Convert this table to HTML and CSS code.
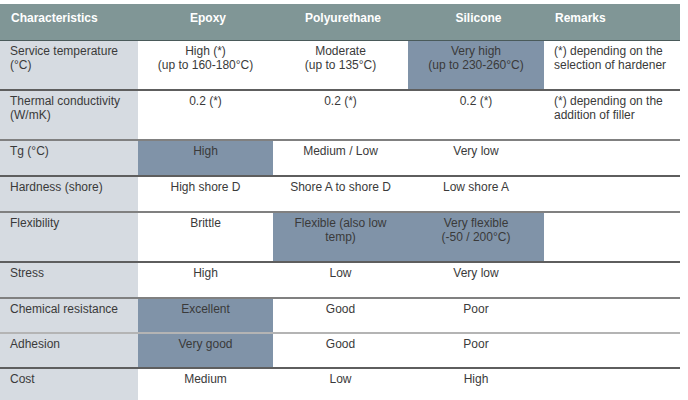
FILE: index.html
```html
<!DOCTYPE html>
<html>
<head>
<meta charset="utf-8">
<link rel="stylesheet" href="styles.css">
</head>
<body>
<table class="cmp">
  <colgroup>
    <col class="c1"><col class="c2"><col class="c3"><col class="c4"><col class="c5">
  </colgroup>
  <thead>
    <tr class="head">
      <th class="left">Characteristics</th>
      <th>Epoxy</th>
      <th>Polyurethane</th>
      <th>Silicone</th>
      <th class="left">Remarks</th>
    </tr>
  </thead>
  <tbody>
    <tr class="r-tall b-dark">
      <td class="name">Service temperature<br>(°C)</td>
      <td>High (*)<br>(up to 160-180°C)</td>
      <td>Moderate<br>(up to 135°C)</td>
      <td class="hl">Very high<br>(up to 230-260°C)</td>
      <td class="left">(*) depending on the<br>selection of hardener</td>
    </tr>
    <tr class="r-tall b-dark">
      <td class="name">Thermal conductivity<br>(W/mK)</td>
      <td>0.2 (*)</td>
      <td>0.2 (*)</td>
      <td>0.2 (*)</td>
      <td class="left">(*) depending on the<br>addition of filler</td>
    </tr>
    <tr class="r-short b-mid">
      <td class="name">Tg (°C)</td>
      <td class="hl">High</td>
      <td>Medium / Low</td>
      <td>Very low</td>
      <td></td>
    </tr>
    <tr class="r-short b-dark">
      <td class="name">Hardness (shore)</td>
      <td>High shore D</td>
      <td>Shore A to shore D</td>
      <td>Low shore A</td>
      <td></td>
    </tr>
    <tr class="r-tall b-mid">
      <td class="name">Flexibility</td>
      <td>Brittle</td>
      <td class="hl">Flexible (also low<br>temp)</td>
      <td class="hl">Very flexible<br>(-50 / 200°C)</td>
      <td></td>
    </tr>
    <tr class="r-short b-dark">
      <td class="name">Stress</td>
      <td>High</td>
      <td>Low</td>
      <td>Very low</td>
      <td></td>
    </tr>
    <tr class="r-mid b-mid">
      <td class="name">Chemical resistance</td>
      <td class="hl">Excellent</td>
      <td>Good</td>
      <td>Poor</td>
      <td></td>
    </tr>
    <tr class="r-mid b-light">
      <td class="name">Adhesion</td>
      <td class="hl">Very good</td>
      <td>Good</td>
      <td>Poor</td>
      <td></td>
    </tr>
    <tr class="r-short b-dark">
      <td class="name">Cost</td>
      <td>Medium</td>
      <td>Low</td>
      <td>High</td>
      <td></td>
    </tr>
  </tbody>
</table>
</body>
</html>
```
FILE: styles.css
```css
html, body {
  margin: 0;
  padding: 0;
  background: #ffffff;
}
body {
  padding-top: 4px;
  font-family: "Liberation Sans", Arial, sans-serif;
  font-size: 12px;
  color: #3a3a3a;
}
.cmp {
  border-collapse: collapse;
  table-layout: fixed;
  width: 680px;
}
.c1 { width: 138px; }
.c2 { width: 135px; }
.c3 { width: 135px; }
.c4 { width: 136px; }
.c5 { width: 136px; }

.head th {
  background: #809696;
  color: #ffffff;
  font-weight: bold;
  font-size: 12px;
  height: 36px;
  padding: 7px 6px 0 11px;
  text-align: center;
  vertical-align: top;
  box-sizing: border-box;
  line-height: 14px;
  border-bottom: 1px solid #4a5a5a;
}
.cmp th.left, .cmp td.left { text-align: left; }

.cmp td {
  text-align: center;
  vertical-align: top;
  padding: 3px 4px 0;
  line-height: 14px;
  box-sizing: border-box;
}
.cmp td.name,
.cmp td.left {
  padding-left: 10px;
}
.cmp td.name {
  background: #d6dbe1;
  text-align: left;
}
.cmp td.hl {
  background: #8093a8;
}
.r-tall td { height: 50px; }
.r-short td { height: 36px; }
.r-mid td { height: 35px; }

.b-dark td { border-top: 2px solid #5e5e5e; }
.b-mid td { border-top: 2px solid #808080; }
.b-light td { border-top: 2px solid #b4b4b4; }
tbody tr:first-child td { border-top: none; }
```
